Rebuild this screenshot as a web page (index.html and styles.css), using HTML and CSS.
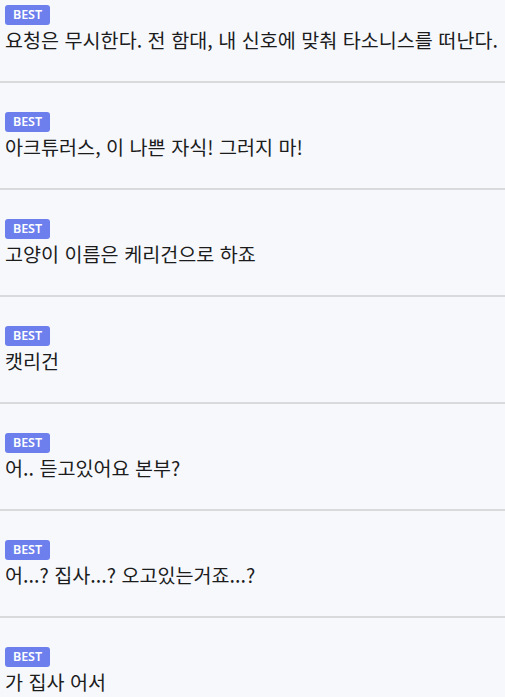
FILE: index.html
```html
<!DOCTYPE html>
<html lang="ko">
<head>
<meta charset="utf-8">
<link rel="stylesheet" href="styles.css">
</head>
<body>
<ul class="list">
  <li class="item"><span class="badge">BEST</span><p class="text">요청은 무시한다. 전 함대, 내 신호에 맞춰 타소니스를 떠난다.</p></li>
  <li class="item"><span class="badge">BEST</span><p class="text">아크튜러스, 이 나쁜 자식! 그러지 마!</p></li>
  <li class="item"><span class="badge">BEST</span><p class="text">고양이 이름은 케리건으로 하죠</p></li>
  <li class="item"><span class="badge">BEST</span><p class="text">캣리건</p></li>
  <li class="item"><span class="badge">BEST</span><p class="text">어.. 듣고있어요 본부?</p></li>
  <li class="item"><span class="badge">BEST</span><p class="text">어...? 집사...? 오고있는거죠...?</p></li>
  <li class="item"><span class="badge">BEST</span><p class="text">가 집사 어서</p></li>
</ul>
</body>
</html>
```
FILE: styles.css
```css
html, body {
  margin: 0;
  padding: 0;
  background: #f6f8fc;
}
body {
  font-family: "Noto Sans CJK KR", "Noto Sans", sans-serif;
  color: #1c1c1c;
  overflow: hidden;
}
.list {
  list-style: none;
  margin: 0;
  padding: 0;
}
.item {
  display: flex;
  flex-direction: column;
  align-items: flex-start;
  gap: 1px;
  padding: 29px 5px 28px;
  border-bottom: 2px solid #d9dadc;
}
.item:first-child {
  padding-top: 5px;
}
.badge {
  display: inline-flex;
  align-items: center;
  justify-content: center;
  height: 20px;
  width: 45px;
  border-radius: 3px;
  background: #6c7fec;
  color: #ffffff;
  font-family: "Noto Sans", sans-serif;
  font-weight: 600;
  font-size: 12.5px;
  line-height: 1;
}
.text {
  margin: 0;
  font-size: 19.6px;
  line-height: 27px;
  white-space: nowrap;
}
```
